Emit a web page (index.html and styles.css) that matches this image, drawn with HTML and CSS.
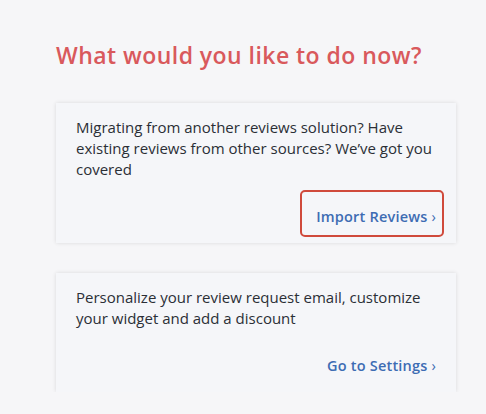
FILE: index.html
```html
<!DOCTYPE html>
<html lang="en">
<head>
  <meta charset="utf-8">
  <title>What would you like to do now?</title>
  <link rel="stylesheet" href="styles.css">
</head>
<body>
  <div class="page">
    <h1 class="title">What would you like to do now?</h1>

    <div class="card">
      <p class="card_text">Migrating from another reviews solution? Have existing reviews from other sources? We’ve got you covered</p>
      <div class="card_action">
        <a class="card_link highlighted" href="#">Import Reviews <span class="chev">›</span></a>
      </div>
    </div>

    <div class="card">
      <p class="card_text">Personalize your review request email, customize your widget and add a discount</p>
      <div class="card_action">
        <a class="card_link" href="#">Go to Settings <span class="chev">›</span></a>
      </div>
    </div>
  </div>
</body>
</html>
```

FILE: styles.css
```css
html, body {
  margin: 0;
  padding: 0;
  background: #f6f6f8;
  font-family: "Open Sans", "Noto Sans", sans-serif;
}

.page {
  width: 400px;
  padding: 40px 0 0 56px;
  display: flex;
  flex-direction: column;
  gap: 30px;
}

.title {
  margin: 0 0 3px 0;
  font-size: 23px;
  font-weight: 600;
  line-height: 30px;
  color: #d9595c;
  letter-spacing: 0.45px;
}

.card {
  background: #f5f6f9;
  box-shadow: 0 0 4px rgba(0, 0, 0, 0.12);
  padding: 14px 20px 16px 20px;
  display: flex;
  flex-direction: column;
}

.card_text {
  margin: 0 -6px 0 0;
  font-size: 15px;
  line-height: 21px;
  color: #2b2f36;
}

.card_action {
  display: flex;
  justify-content: flex-end;
  margin-top: 26px;
}

.card_link {
  position: relative;
  font-size: 14.5px;
  line-height: 21px;
  font-weight: 600;
  color: #3d6cb3;
  letter-spacing: 0.2px;
  text-decoration: none;
}

.chev {
  font-weight: 400;
}

.highlighted::after {
  content: "";
  position: absolute;
  left: -16px;
  right: -8px;
  top: -16px;
  bottom: -10px;
  border: 2px solid #d04a3c;
  border-radius: 5px;
}
```
